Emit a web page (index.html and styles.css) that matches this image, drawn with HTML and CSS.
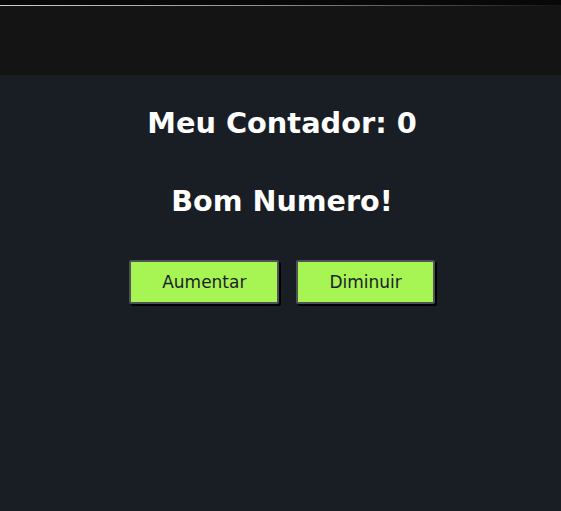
FILE: index.html
```html
<!DOCTYPE html>
<html lang="pt">
<head>
<meta charset="utf-8">
<title>Contador</title>
<link rel="stylesheet" href="styles.css">
</head>
<body>
<div class="topline"></div>
<header class="bar"></header>
<main class="app">
  <h1 class="title">Meu Contador: 0</h1>
  <h2 class="msg">Bom Numero!</h2>
  <div class="actions">
    <button class="btn">Aumentar</button>
    <button class="btn">Diminuir</button>
  </div>
</main>
</body>
</html>
```
FILE: styles.css
```css
html, body {
  margin: 0;
  padding: 0;
  height: 100%;
  background: #191d24;
  font-family: "DejaVu Sans", sans-serif;
}
.topline {
  height: 5px;
  background: #080808;
  border-bottom: 1px solid transparent;
  border-image: linear-gradient(to right, #cfcfcf, #8a8a8a 50%, #141414) 1;
}
.bar {
  height: 69px;
  background: #141414;
}
.app {
  display: flex;
  flex-direction: column;
  align-items: center;
  color: #fff;
}
.title {
  margin: 30px 0 0;
  padding-left: 3px;
  font-size: 28.8px;
  font-weight: bold;
  line-height: 36px;
}
.msg {
  margin: 42px 0 0;
  padding-left: 3px;
  font-size: 28.6px;
  font-weight: bold;
  line-height: 36px;
}
.actions {
  display: flex;
  gap: 17px;
  margin-top: 41px;
  padding-left: 3px;
}
.btn {
  background: #a6f552;
  color: #1d1d2b;
  font-family: "DejaVu Sans", sans-serif;
  font-size: 17px;
  padding: 0 31px;
  height: 44px;
  border: 2px solid #4f5257;
  border-radius: 2px;
  box-shadow: 2px 2px 0 #000;
}
```
